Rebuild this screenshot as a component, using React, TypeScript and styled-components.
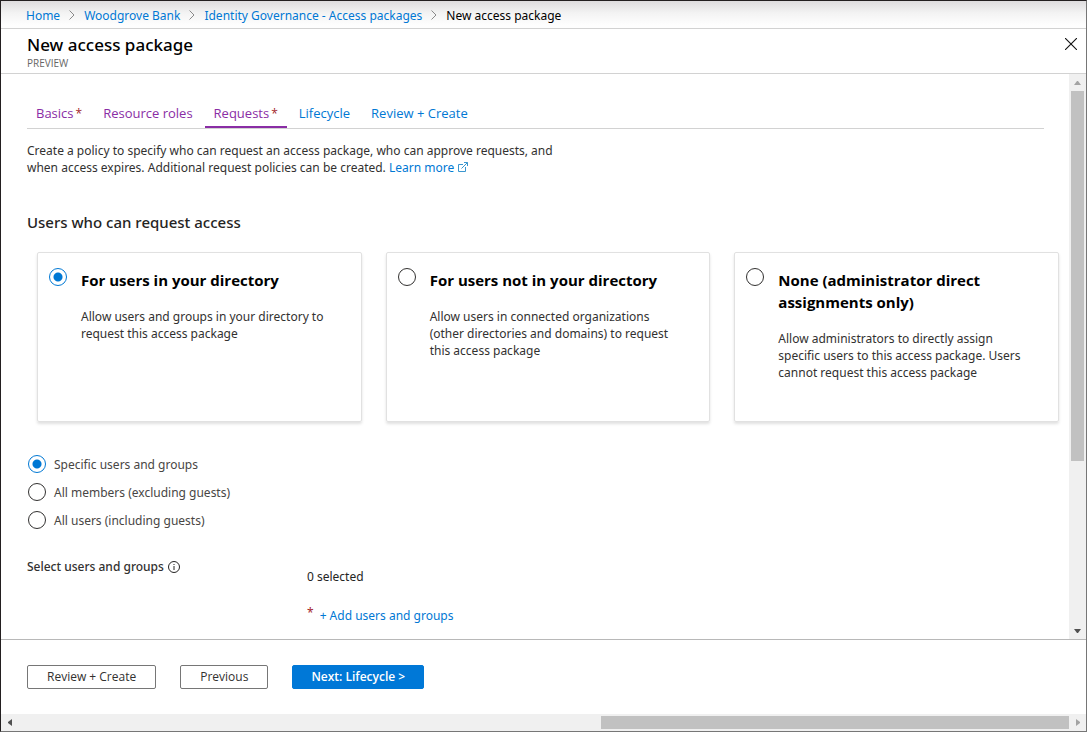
import React, { useState } from "react";
import styled, { createGlobalStyle, css } from "styled-components";

const GlobalStyle = createGlobalStyle`
  *, *::before, *::after { box-sizing: border-box; }
  body { margin: 0; background: #fff; }
  body, button, input {
    font-family: "Noto Sans", "Segoe UI", sans-serif;
    font-size: 12px;
    line-height: 17px;
  }
  h1, h2, h3, p, ol, ul, fieldset { margin: 0; padding: 0; border: 0; }
  a { color: #0078d4; text-decoration: none; }
  button { cursor: pointer; }
`;

const Window = styled.div`
  display: flex;
  flex-direction: column;
  min-height: 100vh;
  border: 1px solid #231f20;
  border-right-color: #767676;
  border-bottom-color: #767676;
`;

const Breadcrumb = styled.nav`
  height: 28px;
  padding: 0 25px;
  border-bottom: 1px solid #d2d2d2;
  background: linear-gradient(#dedcde 0, #f3f3f3 12px, #fefefe 24px);

  ol {
    display: flex;
    align-items: center;
    gap: 9px;
    height: 28px;
    list-style: none;
  }
  li { display: flex; align-items: center; gap: 9px; }
`;

const Header = styled.header`
  display: flex;
  justify-content: space-between;
  align-items: flex-start;
  height: 45px;
  padding: 4px 9px 0 26px;
  border-bottom: 1px solid #d2d2d2;
`;

const PageTitle = styled.h1`
  font-size: 17px;
  line-height: 24px;
  font-weight: 500;
`;

const Preview = styled.p`
  font-family: "Open Sans", "Segoe UI", sans-serif;
  font-size: 10px;
  line-height: 12px;
  color: #666;
`;

const CloseButton = styled.button`
  display: flex;
  padding: 5px 0 0;
  border: 0;
  background: none;
`;

const Main = styled.div`
  display: flex;
  flex: 1;
`;

const Content = styled.main`
  flex: 1;
  min-width: 0;
  padding: 25px 10px 12px 26px;
`;

const Tabs = styled.div`
  display: flex;
  gap: 3px;
  margin-right: 15px;
  border-bottom: 1px solid #d2d2d2;
`;

const Required = styled.span`
  color: #a4262c;
  line-height: 12px;
`;

const Tab = styled.button<{ $visited?: boolean; $active?: boolean }>`
  height: 29px;
  padding: 1px 9px 0;
  border: 0;
  border-bottom: 2px solid ${(p) => (p.$active ? "#8a2da5" : "transparent")};
  background: none;
  color: ${(p) => (p.$visited ? "#8a2da5" : "#0078d4")};
  font-family: "Open Sans", "Segoe UI", sans-serif;
  font-size: 13px;
  white-space: nowrap;

  ${Required} {
    margin-left: 2px;
    font-size: 12px;
  }
`;

const Intro = styled.p`
  max-width: 550px;
  margin-top: 13px;
  color: #323130;
`;

const IconLink = styled.a`
  white-space: nowrap;

  svg { margin-left: 4px; }
`;

const SectionTitle = styled.h2`
  margin-top: 35px;
  font-size: 15px;
  line-height: 22px;
  font-weight: 500;
  color: #252423;
`;

const Cards = styled.fieldset`
  display: grid;
  grid-template-columns: repeat(3, 1fr);
  gap: 24px;
  margin: 19px 0 0 10px;
  min-width: 0;
`;

const Card = styled.label`
  display: flex;
  gap: 14px;
  min-height: 170px;
  padding: 15px 24px 15px 11px;
  border: 1px solid #e1e1e1;
  border-radius: 2px;
  box-shadow: 0 2px 3px rgba(0, 0, 0, 0.12);
`;

const CardTitle = styled.span`
  display: block;
  padding-top: 1px;
  font-family: "Open Sans", "Segoe UI", sans-serif;
  font-size: 15px;
  line-height: 22px;
  font-weight: 700;
  color: #000;
`;

const CardText = styled.span`
  display: block;
  margin-top: 17px;
  color: #323130;
`;

const Radio = styled.input.attrs({ type: "radio" })`
  flex: none;
  appearance: none;
  width: 18px;
  height: 18px;
  margin: 0;
  border: 1px solid #323130;
  border-radius: 50%;
  background: #fff;

  &:checked {
    border-color: #0078d4;
    background: radial-gradient(circle, #0078d4 0 4px, #fff 5px);
  }
`;

const Options = styled.fieldset`
  display: grid;
  gap: 10px;
  margin: 33px 0 0 1px;
`;

const Option = styled.label`
  display: flex;
  align-items: center;
  gap: 8px;
  height: 18px;
  color: #484644;
`;

const Picker = styled.section`
  display: grid;
  grid-template-columns: 280px 1fr;
  margin-top: 29px;
`;

const PickerLabel = styled.div`
  display: flex;
  align-items: center;
  gap: 4px;
  height: 17px;
  font-weight: 500;
  color: #323130;
`;

const PickerValue = styled.div`
  padding-top: 10px;
  color: #252423;
`;

const AddRow = styled.div`
  display: flex;
  gap: 6px;
  margin-top: 22px;
`;

const Footer = styled.footer`
  display: flex;
  gap: 24px;
  height: 75px;
  padding: 25px 26px;
  border-top: 1px solid #b8b8b8;
`;

const Button = styled.button<{ $primary?: boolean }>`
  height: 24px;
  padding: 0 19px;
  border: 1px solid #767676;
  border-radius: 2px;
  background: #fff;
  color: #323130;
  font-family: "Open Sans", "Segoe UI", sans-serif;
  line-height: 20px;
  ${(p) =>
    p.$primary &&
    css`
      padding: 0 18px;
      border-color: #0078d7;
      background: #0078d7;
      color: #fff;
      font-weight: 600;
    `}
`;

const Scrollbar = styled.div<{ $horizontal?: boolean }>`
  display: flex;
  flex-direction: ${(p) => (p.$horizontal ? "row" : "column")};
  flex: 0 0 17px;
  padding: ${(p) => (p.$horizontal ? "2px 0" : "0 2px")};
  background: #f0f0f0;
`;

const Arrow = styled.span<{ $horizontal?: boolean }>`
  display: flex;
  align-items: center;
  justify-content: center;
  width: ${(p) => (p.$horizontal ? "17px" : "13px")};
  height: ${(p) => (p.$horizontal ? "13px" : "17px")};
`;

const Track = styled.div<{ $end?: boolean }>`
  display: flex;
  flex: 1;
  justify-content: ${(p) => (p.$end ? "flex-end" : "flex-start")};
`;

const Thumb = styled.div<{ $horizontal?: boolean }>`
  width: ${(p) => (p.$horizontal ? "44.5%" : "100%")};
  height: ${(p) => (p.$horizontal ? "100%" : "69.7%")};
  background: #c1c1c1;
`;

const arrowPoints = {
  up: "0,4 3,0 4,0 7,4",
  down: "0,0 7,0 4,4 3,4",
  left: "4,0 4,7 0,4 0,3",
  right: "0,0 4,3 4,4 0,7",
};

function ScrollArrow({ dir, dim }: { dir: keyof typeof arrowPoints; dim?: boolean }) {
  const horizontal = dir === "left" || dir === "right";
  return (
    <Arrow $horizontal={horizontal}>
      <svg width={horizontal ? 4 : 7} height={horizontal ? 7 : 4} aria-hidden="true">
        <polygon points={arrowPoints[dir]} fill={dim ? "#a3a3a3" : "#505050"} />
      </svg>
    </Arrow>
  );
}

const Chevron = () => (
  <svg width="6" height="10" viewBox="0 0 6 10" fill="none" stroke="#8a8a8a" aria-hidden="true">
    <path d="M0.5 0.5 5 5 0.5 9.5" />
  </svg>
);

const CloseIcon = () => (
  <svg width="12" height="12" viewBox="0 0 12 12" stroke="#111" strokeWidth="1.1" aria-hidden="true">
    <path d="M0 0 12 12M12 0 0 12" />
  </svg>
);

const ExternalIcon = () => (
  <svg width="10" height="10" viewBox="0 0 10 10" fill="none" stroke="#3a96cf" aria-hidden="true">
    <path d="M5 2.5H.5v7h7V5M3.5 6.5 9.5 .5M6 .5h3.5V4" />
  </svg>
);

const InfoIcon = () => (
  <svg width="12" height="12" viewBox="0 0 12 12" fill="none" stroke="#252423" aria-hidden="true">
    <circle cx="6" cy="6" r="5.5" />
    <path d="M6 5v4M6 3v1" />
  </svg>
);

const crumbs = ["Home", "Woodgrove Bank", "Identity Governance - Access packages"];

const tabs = [
  { label: "Basics", required: true, visited: true },
  { label: "Resource roles", visited: true },
  { label: "Requests", required: true, visited: true },
  { label: "Lifecycle" },
  { label: "Review + Create" },
];

const scopes = [
  {
    title: "For users in your directory",
    text: "Allow users and groups in your directory to request this access package",
  },
  {
    title: "For users not in your directory",
    text: "Allow users in connected organizations (other directories and domains) to request this access package",
  },
  {
    title: "None (administrator direct assignments only)",
    text: "Allow administrators to directly assign specific users to this access package. Users cannot request this access package",
  },
];

const audiences = [
  "Specific users and groups",
  "All members (excluding guests)",
  "All users (including guests)",
];

export default function App() {
  const [scope, setScope] = useState(0);
  const [audience, setAudience] = useState(0);
  const [tab, setTab] = useState("Requests");

  return (
    <Window>
      <GlobalStyle />
      <Breadcrumb aria-label="Breadcrumb">
        <ol>
          {crumbs.map((c) => (
            <li key={c}>
              <a href="#">{c}</a>
              <Chevron />
            </li>
          ))}
          <li aria-current="page">New access package</li>
        </ol>
      </Breadcrumb>

      <Header>
        <div>
          <PageTitle>New access package</PageTitle>
          <Preview>PREVIEW</Preview>
        </div>
        <CloseButton aria-label="Close">
          <CloseIcon />
        </CloseButton>
      </Header>

      <Main>
        <Content>
          <Tabs role="tablist">
            {tabs.map((t) => (
              <Tab
                key={t.label}
                role="tab"
                aria-selected={tab === t.label}
                $active={tab === t.label}
                $visited={t.visited}
                onClick={() => setTab(t.label)}
              >
                {t.label}
                {t.required && <Required>*</Required>}
              </Tab>
            ))}
          </Tabs>

          <Intro>
            Create a policy to specify who can request an access package, who can approve requests, and
            when access expires. Additional request policies can be created.{" "}
            <IconLink href="#">
              Learn more
              <ExternalIcon />
            </IconLink>
          </Intro>

          <SectionTitle id="scope-title">Users who can request access</SectionTitle>
          <Cards aria-labelledby="scope-title">
            {scopes.map((s, i) => (
              <Card key={s.title}>
                <Radio name="scope" checked={scope === i} onChange={() => setScope(i)} />
                <span>
                  <CardTitle>{s.title}</CardTitle>
                  <CardText>{s.text}</CardText>
                </span>
              </Card>
            ))}
          </Cards>

          <Options aria-label="Audience">
            {audiences.map((a, i) => (
              <Option key={a}>
                <Radio name="audience" checked={audience === i} onChange={() => setAudience(i)} />
                {a}
              </Option>
            ))}
          </Options>

          <Picker>
            <PickerLabel>
              Select users and groups
              <InfoIcon />
            </PickerLabel>
            <PickerValue>
              <p>0 selected</p>
              <AddRow>
                <Required>*</Required>
                <a href="#">+ Add users and groups</a>
              </AddRow>
            </PickerValue>
          </Picker>
        </Content>

        <Scrollbar aria-hidden="true">
          <ScrollArrow dir="up" dim />
          <Track>
            <Thumb />
          </Track>
          <ScrollArrow dir="down" />
        </Scrollbar>
      </Main>

      <Footer>
        <Button>Review + Create</Button>
        <Button>Previous</Button>
        <Button $primary>Next: Lifecycle &gt;</Button>
      </Footer>

      <Scrollbar $horizontal aria-hidden="true">
        <ScrollArrow dir="left" />
        <Track $end>
          <Thumb $horizontal />
        </Track>
        <ScrollArrow dir="right" dim />
      </Scrollbar>
    </Window>
  );
}
